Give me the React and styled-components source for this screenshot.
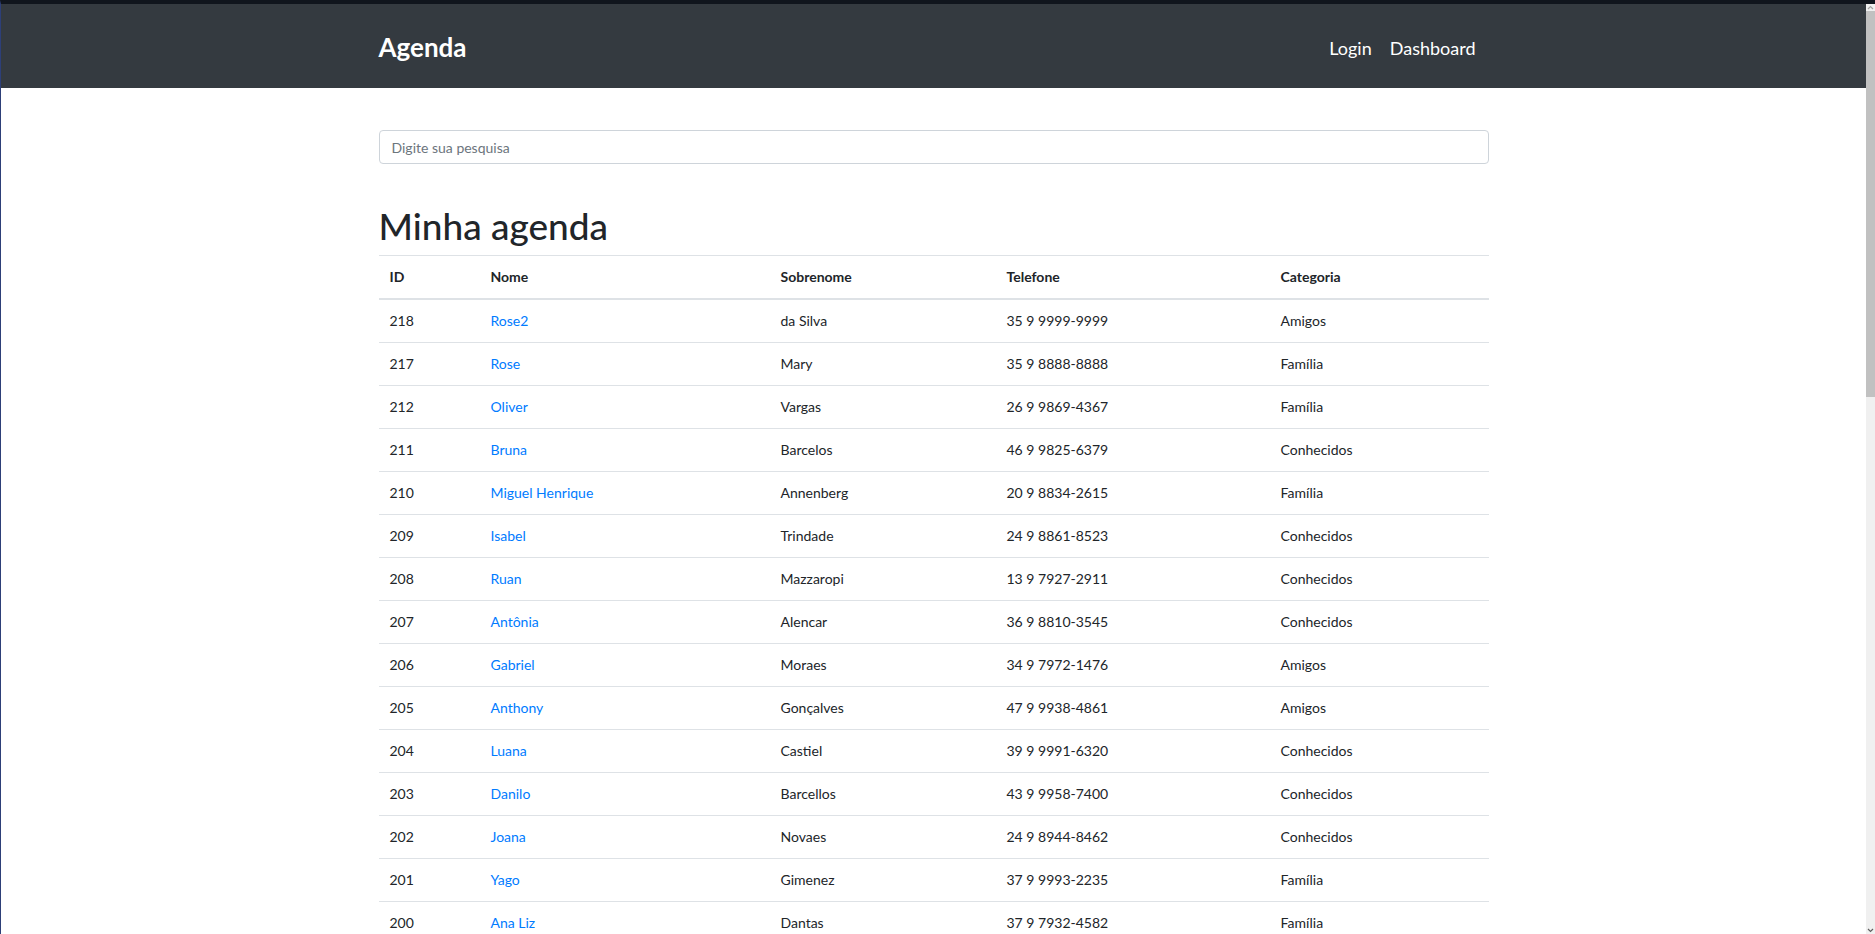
import React from 'react';
import styled, { createGlobalStyle } from 'styled-components';

const GlobalStyle = createGlobalStyle`
  * {
    box-sizing: border-box;
  }

  body {
    margin: 0;
    font-family: Lato, "Noto Sans", sans-serif;
    color: #212529;
    background: #10151d;
  }
`;

const contacts = [
  { id: 218, nome: 'Rose2', sobrenome: 'da Silva', telefone: '35 9 9999-9999', categoria: 'Amigos' },
  { id: 217, nome: 'Rose', sobrenome: 'Mary', telefone: '35 9 8888-8888', categoria: 'Família' },
  { id: 212, nome: 'Oliver', sobrenome: 'Vargas', telefone: '26 9 9869-4367', categoria: 'Família' },
  { id: 211, nome: 'Bruna', sobrenome: 'Barcelos', telefone: '46 9 9825-6379', categoria: 'Conhecidos' },
  { id: 210, nome: 'Miguel Henrique', sobrenome: 'Annenberg', telefone: '20 9 8834-2615', categoria: 'Família' },
  { id: 209, nome: 'Isabel', sobrenome: 'Trindade', telefone: '24 9 8861-8523', categoria: 'Conhecidos' },
  { id: 208, nome: 'Ruan', sobrenome: 'Mazzaropi', telefone: '13 9 7927-2911', categoria: 'Conhecidos' },
  { id: 207, nome: 'Antônia', sobrenome: 'Alencar', telefone: '36 9 8810-3545', categoria: 'Conhecidos' },
  { id: 206, nome: 'Gabriel', sobrenome: 'Moraes', telefone: '34 9 7972-1476', categoria: 'Amigos' },
  { id: 205, nome: 'Anthony', sobrenome: 'Gonçalves', telefone: '47 9 9938-4861', categoria: 'Amigos' },
  { id: 204, nome: 'Luana', sobrenome: 'Castiel', telefone: '39 9 9991-6320', categoria: 'Conhecidos' },
  { id: 203, nome: 'Danilo', sobrenome: 'Barcellos', telefone: '43 9 9958-7400', categoria: 'Conhecidos' },
  { id: 202, nome: 'Joana', sobrenome: 'Novaes', telefone: '24 9 8944-8462', categoria: 'Conhecidos' },
  { id: 201, nome: 'Yago', sobrenome: 'Gimenez', telefone: '37 9 9993-2235', categoria: 'Família' },
  { id: 200, nome: 'Ana Liz', sobrenome: 'Dantas', telefone: '37 9 7932-4582', categoria: 'Família' },
];

// larguras das colunas medidas na tela original
const columns = [
  { label: 'ID', width: 101 },
  { label: 'Nome', width: 290 },
  { label: 'Sobrenome', width: 226 },
  { label: 'Telefone', width: 274 },
  { label: 'Categoria', width: 219 },
];

const App = () => {
  return (
    <>
      <GlobalStyle />
      <Frame>
        <Page>
          <Navbar>
            <Container $row>
              <Brand href="/">Agenda</Brand>
              <NavLinks>
                <NavLink href="/login">Login</NavLink>
                <NavLink href="/dashboard">Dashboard</NavLink>
              </NavLinks>
            </Container>
          </Navbar>

          <Main>
            <Container>
              <SearchInput type="text" placeholder="Digite sua pesquisa" />
              <Title>Minha agenda</Title>
              <Table>
                <colgroup>
                  {columns.map((c) => (
                    <col key={c.label} style={{ width: c.width }} />
                  ))}
                </colgroup>
                <thead>
                  <tr>
                    {columns.map((c) => (
                      <Th key={c.label}>{c.label}</Th>
                    ))}
                  </tr>
                </thead>
                <tbody>
                  {contacts.map((c) => (
                    <tr key={c.id}>
                      <Td>{c.id}</Td>
                      <Td>
                        <ContactLink href={`/contato/${c.id}`}>{c.nome}</ContactLink>
                      </Td>
                      <Td>{c.sobrenome}</Td>
                      <Td>{c.telefone}</Td>
                      <Td>{c.categoria}</Td>
                    </tr>
                  ))}
                </tbody>
              </Table>
            </Container>
          </Main>
        </Page>

        {/* barra de rolagem da janela */}
        <ScrollTrack>
          <ScrollArrow>
            <svg width="9" height="7" viewBox="0 0 9 7">
              <path d="M2 5 L4.5 2.5 L7 5" fill="none" stroke="#a3a3a3" strokeWidth="1.2" />
            </svg>
          </ScrollArrow>
          <ScrollThumb />
          <ScrollSpacer />
          <ScrollArrow>
            <svg width="9" height="7" viewBox="0 0 9 7">
              <path d="M2 2 L4.5 4.5 L7 2" fill="none" stroke="#606060" strokeWidth="1.2" />
            </svg>
          </ScrollArrow>
        </ScrollTrack>
      </Frame>
    </>
  );
};

export default App;

const Frame = styled.div`
  display: flex;
  height: 100vh;
  border-top: 4px solid #10151d;
  border-left: 1px solid #2d3f78;
  overflow: hidden;
`;

const Page = styled.div`
  flex: 1;
  min-width: 0;
  background: #fff;
  overflow: hidden;
`;

const Navbar = styled.nav`
  height: 84px;
  background-color: #343a40;
  display: flex;
  align-items: center;
`;

const Container = styled.div`
  width: 100%;
  max-width: 1140px;
  margin: 0 auto;
  padding: 0 15px;
  ${(p) =>
    p.$row &&
    `
    display: flex;
    align-items: center;
    justify-content: space-between;
  `}
`;

const Brand = styled.a`
  color: #fff;
  font-size: 26px;
  font-weight: 700;
  text-decoration: none;
  line-height: 1;
  margin-top: 2px;
`;

const NavLinks = styled.div`
  display: flex;
  align-items: center;
  margin-right: 4px;
`;

const NavLink = styled.a`
  color: #fff;
  font-size: 18px;
  text-decoration: none;
  padding: 0 9px;
  line-height: 1;
  margin-top: 4px;
`;

const Main = styled.main`
  padding-top: 42px;
`;

const SearchInput = styled.input`
  display: block;
  width: 100%;
  height: 34px;
  padding: 0 12px;
  font-family: inherit;
  font-size: 14px;
  color: #495057;
  border: 1px solid #ced4da;
  border-radius: 4px;
  outline: none;

  &::placeholder {
    color: #6c757d;
  }
`;

const Title = styled.h1`
  margin: 38px 0 5px;
  font-size: 37px;
  font-weight: 500;
  line-height: 48px;
  color: #212529;
`;

const Table = styled.table`
  width: 100%;
  table-layout: fixed;
  border-collapse: collapse;
  font-size: 14px;
  color: #212529;
`;

const Th = styled.th`
  text-align: left;
  font-weight: 700;
  padding: 10px 11px;
  line-height: 22px;
  border-top: 1px solid #dee2e6;
  border-bottom: 2px solid #dee2e6;
`;

const Td = styled.td`
  padding: 10px 11px;
  line-height: 22px;
  border-bottom: 1px solid #dee2e6;
`;

const ContactLink = styled.a`
  color: #007bff;
  text-decoration: none;
`;

const ScrollTrack = styled.div`
  width: 9px;
  background: #f0f0f0;
  display: flex;
  flex-direction: column;
`;

const ScrollArrow = styled.div`
  height: 7px;
  display: flex;
`;

const ScrollThumb = styled.div`
  height: 386px;
  background: #c1c1c1;
`;

const ScrollSpacer = styled.div`
  flex: 1;
`;
